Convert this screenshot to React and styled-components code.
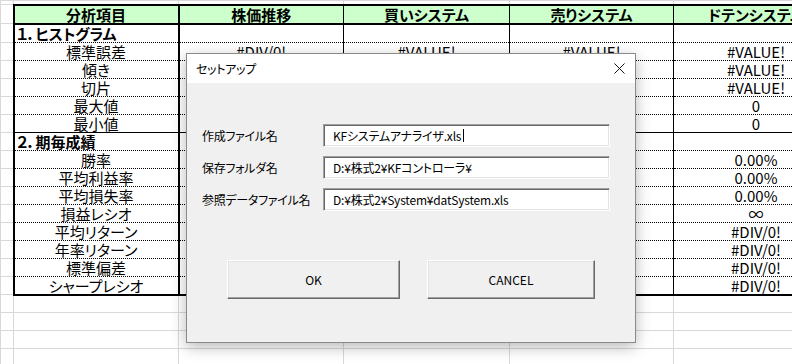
import React from 'react'
import styled, { createGlobalStyle } from 'styled-components'

const GlobalStyle = createGlobalStyle`
  html, body {
    margin: 0;
    padding: 0;
    background: #fff;
    overflow: hidden;
  }
  body {
    font-family: "Noto Sans CJK JP", "Noto Sans", sans-serif;
  }
`

const columns = [13, 165, 165, 166, 164, 165]
const headers = ['分析項目', '株価推移', '買いシステム', '売りシステム', 'ドテンシステム']

// columns B-D lie under the dialog below the first data row
const rows = [
  { label: '１．ヒストグラム', section: true, vals: ['', '', '', ''] },
  { label: '標準誤差', vals: ['#DIV/0!', '#VALUE!', '#VALUE!', '#VALUE!'] },
  { label: '傾き', vals: ['', '', '', '#VALUE!'] },
  { label: '切片', vals: ['', '', '', '#VALUE!'] },
  { label: '最大値', vals: ['', '', '', '0'] },
  { label: '最小値', vals: ['', '', '', '0'] },
  { label: '２．期毎成績', section: true, solidTop: true, vals: ['', '', '', ''] },
  { label: '勝率', vals: ['', '', '', '0.00%'] },
  { label: '平均利益率', vals: ['', '', '', '0.00%'] },
  { label: '平均損失率', vals: ['', '', '', '0.00%'] },
  { label: '損益レシオ', vals: ['', '', '', '∞'] },
  { label: '平均リターン', vals: ['', '', '', '#DIV/0!'] },
  { label: '年率リターン', vals: ['', '', '', '#DIV/0!'] },
  { label: '標準偏差', vals: ['', '', '', '#DIV/0!'] },
  { label: 'シャープレシオ', vals: ['', '', '', '#DIV/0!'] },
]

const fields = [
  { label: '作成ファイル名', value: 'KFシステムアナライザ.xls', focused: true },
  { label: '保存フォルダ名', value: 'D:¥株式2¥KFコントローラ¥' },
  { label: '参照データファイル名', value: 'D:¥株式2¥System¥datSystem.xls' },
]

const Page = styled.div`
  position: relative;
  width: 792px;
  height: 364px;
  overflow: hidden;
`

const Sheet = styled.table`
  border-collapse: collapse;
  table-layout: fixed;
  width: 838px;
  font-size: 15px;
  font-feature-settings: "palt";
  color: #000;
`

const Col = styled.col`
  width: ${(p) => p.$w}px;
`

const Row = styled.tr`
  height: ${(p) => p.$h}px;
`

const GridCell = styled.td`
  padding: 0;
  border: 1px solid #d9d9d9;
`

const HeadCell = styled.th`
  padding: 0;
  background: #ccffcc;
  font-weight: 700;
  text-align: center;
  line-height: 17px;
  white-space: nowrap;
  overflow: hidden;
  border-top: 2px solid #000;
  border-bottom: 2px solid #000;
  border-left: ${(p) => (p.$first ? 2 : 1)}px solid #000;
  border-right: ${(p) => (p.$first ? 2 : 1)}px solid #000;
`

const ItemCell = styled.td`
  padding: 0 0 0 ${(p) => (p.$section ? 2 : 0)}px;
  text-align: ${(p) => (p.$section ? 'left' : 'center')};
  font-weight: ${(p) => (p.$section ? 700 : 400)};
  line-height: 17px;
  white-space: nowrap;
  overflow: hidden;
  border-left: 2px solid #000;
  border-right: 2px solid #000;
  border-top: ${(p) => (p.$solidTop ? '1px solid #000' : 'none')};
  border-bottom: ${(p) => (p.$last ? '2px solid #000' : '1px dotted #000')};
`

const ValueCell = styled.td`
  padding: 0;
  text-align: center;
  line-height: 17px;
  white-space: nowrap;
  overflow: hidden;
  border-left: 1px solid #000;
  border-right: 1px solid #000;
  border-top: ${(p) => (p.$solidTop ? '1px solid #000' : 'none')};
  border-bottom: ${(p) => (p.$last ? '2px solid #000' : '1px dotted #000')};
`

const Dialog = styled.div`
  position: absolute;
  left: 186px;
  top: 53px;
  width: 450px;
  height: 290px;
  box-sizing: border-box;
  border: 1px solid #8a8a8a;
  background: #f0f0f0;
  box-shadow: 0 4px 14px rgba(0, 0, 0, 0.28);
  display: flex;
  flex-direction: column;
  font-size: 12px;
  font-feature-settings: "palt";
  color: #000;
`

const TitleBar = styled.div`
  height: 29px;
  background: #fff;
  display: flex;
  align-items: center;
  justify-content: space-between;
  padding: 0 10px 0 9px;
`

const Title = styled.span`
  font-size: 12px;
  letter-spacing: -0.3px;
`

const Close = styled.svg`
  width: 11px;
  height: 11px;
  display: block;
`

const Body = styled.div`
  flex: 1;
  display: flex;
  flex-direction: column;
  padding: 41px 0 0 15px;
`

const Form = styled.div`
  display: grid;
  grid-template-columns: 121px 287px;
  grid-auto-rows: 23px;
  row-gap: 9px;
  align-items: center;
`

const Label = styled.span`
  letter-spacing: -0.3px;
`

const Field = styled.div`
  height: 23px;
  box-sizing: border-box;
  background: #fff;
  border-top: 1px solid #a0a0a0;
  border-left: 1px solid #a0a0a0;
  border-right: 1px solid #fff;
  border-bottom: 1px solid #fff;
  box-shadow: inset 1px 1px 0 #696969, inset -1px -1px 0 #e3e3e3;
  display: flex;
  align-items: center;
  padding-left: 9px;
  white-space: nowrap;
  overflow: hidden;
  letter-spacing: -0.2px;
`

const Caret = styled.span`
  width: 1px;
  height: 13px;
  background: #000;
  margin-left: 2px;
`

const Buttons = styled.div`
  display: flex;
  gap: 27px;
  margin-top: 49px;
  padding-left: 25px;
`

const Button = styled.button`
  width: ${(p) => p.$w}px;
  height: 39px;
  box-sizing: border-box;
  background: #f0f0f0;
  border-top: 1px solid #fff;
  border-left: 1px solid #fff;
  border-right: 1px solid #696969;
  border-bottom: 1px solid #696969;
  box-shadow: inset -1px -1px 0 #a0a0a0, inset 1px 1px 0 #e3e3e3;
  font-family: inherit;
  font-size: 12px;
  color: #000;
  padding: 0;
`

const App = () => {
  return (
    <Page>
      <GlobalStyle />
      <Sheet>
        <colgroup>
          {columns.map((w, i) => (
            <Col key={i} $w={w} />
          ))}
        </colgroup>
        <tbody>
          <Row $h={4}>
            {columns.map((_, i) => (
              <GridCell key={i} />
            ))}
          </Row>
          <Row $h={19}>
            <GridCell />
            {headers.map((h, i) => (
              <HeadCell key={h} $first={i === 0}>
                {h}
              </HeadCell>
            ))}
          </Row>
          {rows.map((r, ri) => {
            const last = ri === rows.length - 1
            return (
              <Row key={r.label} $h={18}>
                <GridCell />
                <ItemCell $section={r.section} $solidTop={r.solidTop} $last={last}>
                  {r.label}
                </ItemCell>
                {r.vals.map((v, vi) => (
                  <ValueCell key={vi} $solidTop={r.solidTop} $last={last}>
                    {v}
                  </ValueCell>
                ))}
              </Row>
            )
          })}
          {[0, 1, 2, 3].map((k) => (
            <Row key={k} $h={18}>
              {columns.map((_, i) => (
                <GridCell key={i} />
              ))}
            </Row>
          ))}
        </tbody>
      </Sheet>

      <Dialog>
        <TitleBar>
          <Title>セットアップ</Title>
          <Close viewBox="0 0 11 11">
            <path d="M0.5 0.5 L10.5 10.5 M10.5 0.5 L0.5 10.5" stroke="#111" strokeWidth="1" fill="none" />
          </Close>
        </TitleBar>
        <Body>
          <Form>
            {fields.map((f) => (
              <React.Fragment key={f.label}>
                <Label>{f.label}</Label>
                <Field>
                  {f.value}
                  {f.focused && <Caret />}
                </Field>
              </React.Fragment>
            ))}
          </Form>
          <Buttons>
            <Button $w={173}>OK</Button>
            <Button $w={168}>CANCEL</Button>
          </Buttons>
        </Body>
      </Dialog>
    </Page>
  )
}

export default App
